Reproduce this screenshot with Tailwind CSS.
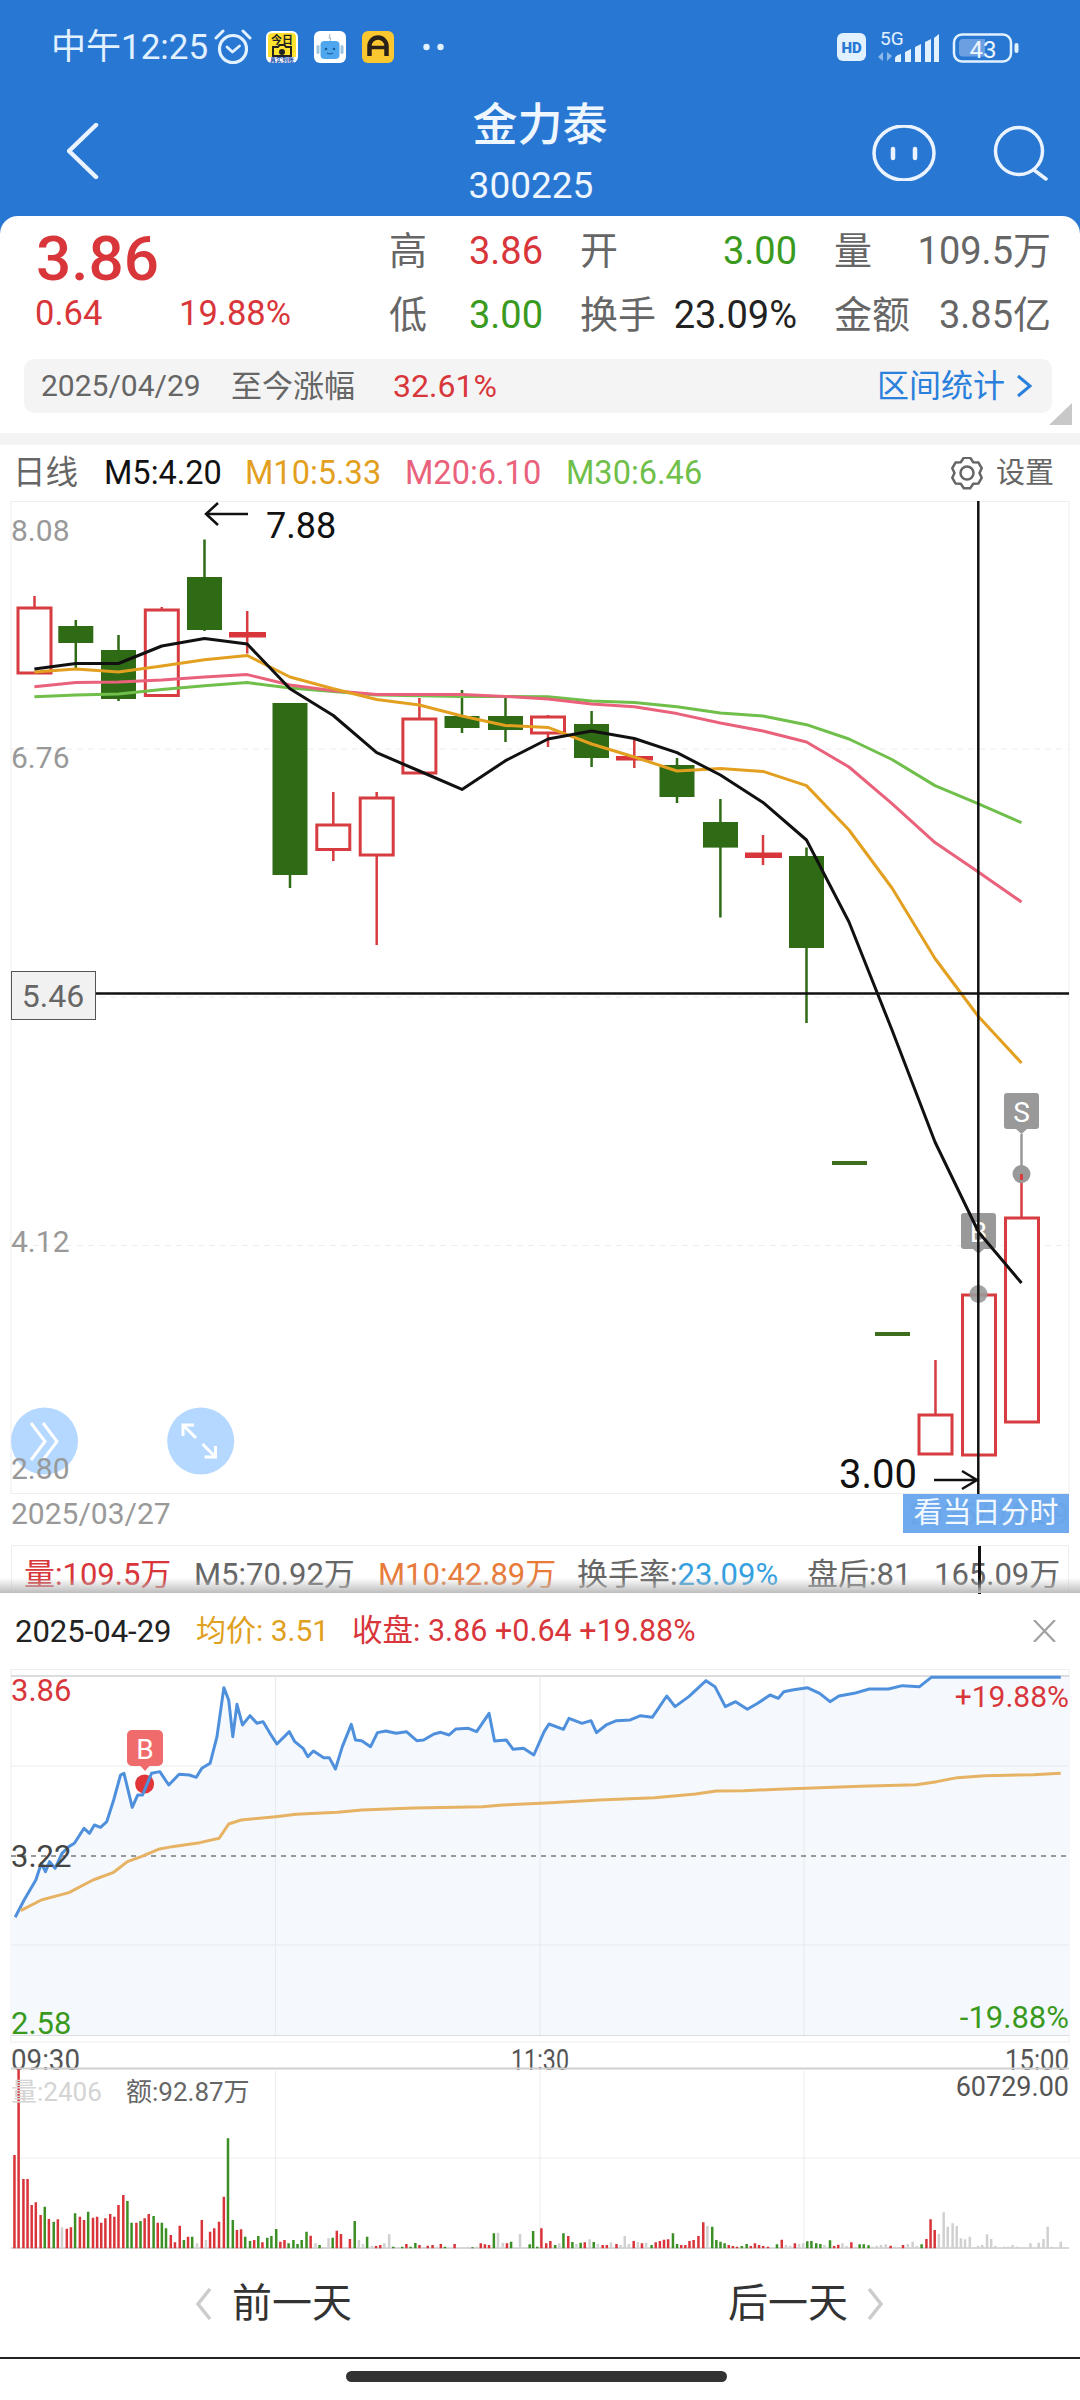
<!DOCTYPE html>
<html lang="zh">
<head>
<meta charset="utf-8">
<script src="https://cdn.jsdelivr.net/npm/@tailwindcss/browser@4"></script>
</head>
<body class="bg-white">
<div class="relative w-[1080px] h-[2400px] overflow-hidden bg-white flex flex-col [font-family:Roboto,'Noto_Sans_CJK_SC',sans-serif]">

  <!-- blue header -->
  <div class="h-[216px] shrink-0 bg-[#2878d3] flex flex-col">
    <div class="h-[94px] flex items-center pl-[51px] text-[#e2f1ff]">
      <span class="text-[35px] leading-none w-[163px] whitespace-nowrap">中午12:25</span>
      <svg class="w-[38px] h-[36px]" viewBox="214 28 38 36" fill="none" stroke="#e2f1ff" stroke-linecap="round" stroke-linejoin="round">
        <circle cx="233" cy="48" r="13.5" stroke-width="3.2"/>
        <path d="M216 37l7-7M243 30l7 7" stroke-width="3"/>
        <path d="M227 46l5.500 5 7-6" stroke-width="2.800"/>
      </svg>
      <svg class="ml-[14px] w-[32px] h-[32px]" viewBox="0 0 32 32">
        <rect width="32" height="32" rx="6" fill="#fff"/>
        <path d="M2 6a4 4 0 0 1 4-4h20a4 4 0 0 1 4 4v20H2z" fill="#fde12f"/>
        <text x="16" y="13" font-size="11" font-weight="700" text-anchor="middle" fill="#222">今日</text>
        <path d="M7 16h5l1.500-2h5l1.500 2h5v9H7z" fill="none" stroke="#222" stroke-width="2"/>
        <circle cx="16" cy="21" r="3" fill="#222"/>
        <text x="16" y="31" font-size="6" font-weight="700" text-anchor="middle" fill="#1d4fb0">真实到账</text>
      </svg>
      <svg class="ml-[16px] w-[32px] h-[32px]" viewBox="0 0 32 32">
        <rect width="32" height="32" rx="6" fill="#fff"/>
        <path d="M16 3l-1 4 2 0-1 3" stroke="#9fb4c6" stroke-width="1" fill="none"/>
        <rect x="2.500" y="14" width="3" height="9" rx="1.500" fill="#9cc4de"/>
        <rect x="26.500" y="14" width="3" height="9" rx="1.500" fill="#9cc4de"/>
        <rect x="6.500" y="10" width="19" height="18" rx="4" fill="#4ea7ee"/>
        <circle cx="12" cy="18" r="1.300" fill="#1b5c95"/>
        <circle cx="20" cy="18" r="1.300" fill="#1b5c95"/>
        <path d="M13 22q3 2 6 0" stroke="#1b5c95" stroke-width="1.100" fill="none"/>
      </svg>
      <svg class="ml-[16px] w-[32px] h-[32px]" viewBox="0 0 32 32">
        <rect width="32" height="32" rx="6" fill="#fbc731"/>
        <path d="M7.500 25V15a8.500 8.500 0 0 1 17 0v10" fill="none" stroke="#2a2218" stroke-width="4.500"/>
        <path d="M7 16.500h18" stroke="#2a2218" stroke-width="3.500"/>
      </svg>
      <svg class="ml-[29px] w-[21px] h-[8px]" viewBox="0 0 21 8"><circle cx="3.500" cy="4" r="3.200" fill="#e2f1ff"/><circle cx="17.500" cy="4" r="3.200" fill="#e2f1ff"/></svg>
      <svg class="ml-auto mr-[60px] w-[183px] h-[36px] overflow-visible" viewBox="837 28 183 36">
        <rect x="837" y="32" width="29" height="28" rx="6" fill="#e2f1ff"/>
        <text x="851.500" y="52" font-size="15" font-weight="900" text-anchor="middle" fill="#2878d3">HD</text>
        <text x="880" y="44" font-size="19" fill="#e2f1ff">5G</text>
        <path d="M883 51v9l-5-4zM887 60v-9l5 4z" fill="#8db9ea"/>
        <path d="M895 61v-3q0-3 3-4l3-1v8zM905 61v-10l6-3v13zM915 61v-15l6-3v18zM925 61v-20l6-3v23zM934 61V37l5-4v28z" fill="#e2f1ff"/>
        <rect x="954" y="33.500" width="57" height="27" rx="8" fill="none" stroke="#e2f1ff" stroke-width="2.500"/>
        <path d="M963 38h22v17.500h-22q-4 0-4-4v-9.500q0-4 4-4z" fill="#6a9fe2"/>
        <text x="983" y="57" font-size="24" text-anchor="middle" fill="#eef6ff">43</text>
        <rect x="1014.500" y="42" width="4" height="10" rx="2" fill="#e2f1ff"/>
      </svg>
    </div>
    <div class="flex items-start h-[122px]">
      <div class="w-[400px] pl-[67px] pt-[29px]">
        <svg class="w-[32px] h-[56px]" viewBox="67 123 32 56" fill="none" stroke="#eaf3ff" stroke-width="4.500" stroke-linecap="round" stroke-linejoin="round"><path d="M96 125L69 151l27 26"/></svg>
      </div>
      <div class="w-[280px] flex flex-col items-center text-[#eef6ff] pt-[10px]">
        <span class="text-[45px] leading-[44px] font-medium">金力泰</span>
        <span class="text-[37px] leading-[40px] mt-[18px] mr-[18px]">300225</span>
      </div>
      <svg class="ml-[192px] mt-[31px] w-[176px] h-[56px]" viewBox="872 125 176 56" fill="none" stroke="#eaf3ff" stroke-linecap="round">
        <ellipse cx="904" cy="153" rx="30" ry="27" stroke-width="3.500"/>
        <path d="M893 149v9M915 149v9" stroke-width="4.500"/>
        <circle cx="1019" cy="151" r="23.500" stroke-width="3.500"/>
        <path d="M1034 170l12 9" stroke-width="3.500"/>
      </svg>
    </div>
  </div>

  <!-- quote card -->
  <div class="shrink-0 bg-[#2878d3]">
  <div class="relative h-[217px] bg-white rounded-t-[18px] flex flex-col">
    <div class="flex h-[143px]">
      <div class="w-[389px] pl-[35px] pt-[13px] flex flex-col text-[#d8363a]">
        <span class="ml-[1px] text-[62px] leading-[60px] font-medium">3.86</span>
        <div class="flex text-[34.500px] leading-[48px]"><span class="w-[144px]">0.64</span><span>19.88%</span></div>
      </div>
      <div class="grid grid-cols-[154px_217px_217px] gap-x-[37px] grid-rows-[63px_65px] pt-[3px] text-[38px] text-[#666] items-center leading-none">
        <div class="flex justify-between"><span>高</span><span class="text-[#d8363a]">3.86</span></div>
        <div class="flex justify-between"><span>开</span><span class="text-[#3a9a1e]">3.00</span></div>
        <div class="flex justify-between"><span>量</span><span>109.5万</span></div>
        <div class="flex justify-between"><span>低</span><span class="text-[#3a9a1e]">3.00</span></div>
        <div class="flex justify-between"><span>换手</span><span class="text-[#222]">23.09%</span></div>
        <div class="flex justify-between"><span>金额</span><span>3.85亿</span></div>
      </div>
    </div>
    <div class="ml-[24px] w-[1028px] h-[54px] bg-[#f4f4f4] rounded-[10px] flex items-center pl-[17px] pr-[19px] text-[30px] text-[#666] leading-none">
      <span class="w-[190px]">2025/04/29</span>
      <span class="w-[162px] text-[31px]">至今涨幅</span>
      <span class="text-[#d8363a] text-[32px]">32.61%</span>
      <span class="ml-auto text-[#2b80dc] text-[32px]">区间统计</span>
      <svg class="ml-[10px] w-[18px] h-[26px]" viewBox="0 0 18 26" fill="none" stroke="#2b80dc" stroke-width="3"><path d="M3 3l12 10-12 10"/></svg>
    </div>
    <svg class="absolute left-[1049px] top-[187px] w-[23px] h-[22px]" viewBox="0 0 23 22"><path d="M23 0v22H0z" fill="#c8c8c8"/></svg>
  </div>
  </div>
  <div class="h-[12px] shrink-0 bg-[#f3f3f3]"></div>

  <!-- MA legend -->
  <div class="h-[56px] shrink-0 flex items-center pl-[13px] pr-[26px] text-[32.500px] leading-none whitespace-nowrap">
    <span class="w-[91px] text-[#666]">日线</span>
    <span class="w-[141px] text-[#111]">M5:4.20</span>
    <span class="w-[160px] text-[#e3a020]">M10:5.33</span>
    <span class="w-[161px] text-[#e9617a]">M20:6.10</span>
    <span class="text-[#6fbf4a]">M30:6.46</span>
    <svg class="ml-auto w-[32px] h-[33px]" viewBox="951 457 32 33" fill="none" stroke="#666" stroke-width="2.500" stroke-linejoin="round">
      <path d="M963.800 457.800h6.400l3.050 4.400 5.250.4 3.200 5.600-2.200 4.800 2.200 4.800-3.200 5.600-5.250.4-3.050 4.400h-6.400l-3.050-4.400-5.250-.4-3.200-5.600 2.200-4.800-2.200-4.800 3.200-5.600 5.250-.4z"/>
      <circle cx="967" cy="473" r="6.500"/>
    </svg>
    <span class="ml-[13px] text-[29px] text-[#666]">设置</span>
  </div>

  <!-- K line chart -->
  <svg class="block shrink-0 w-[1080px] h-[993px] overflow-visible" viewBox="0 501 1080 993">
    <rect x="11" y="501.500" width="1058" height="992" fill="#fff" stroke="#eeeeee" stroke-width="1"/>
    <g stroke="#eeeeee" stroke-width="1" stroke-dasharray="6 5">
      <path d="M11 749h1058M11 997h1058M11 1245.500h1058"/>
    </g>

    <!-- wicks -->
    <g stroke="#d63c40" stroke-width="2.500" fill="none">
      <path d="M34.500 596V673M161.800 607V696M247.200 611V653.500M333.300 792V861M376.700 792V945M419.400 698V773M548 715V747M634.300 740V768M763 835V865"/>
      <path d="M935.500 1360V1414M1021.500 1174V1217"/>
    </g>
    <g stroke="#2f6a14" stroke-width="2.500" fill="none">
      <path d="M75.800 620V668M118.500 635V701M204.500 539.500V631M290 703V888M462 690V733M505.500 696V742M591.600 711V767M677 758V803M720.400 799V917.600M806.500 847.600V1023"/>
    </g>
    <!-- green bodies -->
    <g fill="#2f6a14">
      <rect x="58.300" y="626" width="35" height="17"/>
      <rect x="101" y="650" width="35" height="49"/>
      <rect x="187" y="577" width="35" height="53"/>
      <rect x="272.500" y="703" width="35" height="172"/>
      <rect x="444.500" y="716" width="35" height="12"/>
      <rect x="488" y="716" width="35" height="14"/>
      <rect x="574" y="724" width="35" height="34"/>
      <rect x="659.500" y="765" width="35" height="32"/>
      <rect x="703" y="822" width="35" height="25.600"/>
      <rect x="789" y="856" width="35" height="92"/>
      <rect x="832" y="1161" width="35" height="4" fill="#3f6d1e"/>
      <rect x="875" y="1332" width="35" height="4" fill="#3f6d1e"/>
    </g>
    <!-- red crosses -->
    <g fill="#d8363a">
      <rect x="229" y="632" width="37" height="5.500"/>
      <rect x="616" y="756" width="37" height="4.500"/>
      <rect x="745" y="852.500" width="37" height="5.500"/>
    </g>
    <!-- hollow red bodies -->
    <g fill="#fff" stroke="#d63c40" stroke-width="3">
      <rect x="18" y="608" width="33" height="65"/>
      <rect x="145.300" y="610" width="33" height="85.500"/>
      <rect x="316.800" y="825" width="33" height="24.500"/>
      <rect x="360.200" y="798" width="33" height="57"/>
      <rect x="402.900" y="719" width="33" height="54"/>
      <rect x="531.500" y="717" width="33" height="16"/>
      <rect x="919" y="1415" width="33" height="39"/>
      <rect x="962.500" y="1295" width="33" height="160"/>
      <rect x="1005.500" y="1218" width="33" height="204"/>
    </g>

    <!-- trade markers -->
    <path d="M1021.500 1134V1174" stroke="#999" stroke-width="2.500"/>
    <circle cx="1021.500" cy="1174" r="9" fill="#999"/>
    <path d="M1021.500 1174v6" stroke="#d63c40" stroke-width="3"/>
    <path d="M1007 1093h29a3 3 0 0 1 3 3v30a3 3 0 0 1-3 3h-9l-5.500 5-5.500-5h-9a3 3 0 0 1-3-3v-30a3 3 0 0 1 3-3z" fill="#999"/>
    <text x="1021.500" y="1122" font-size="28" text-anchor="middle" fill="#fff">S</text>
    <circle cx="978.500" cy="1294" r="9" fill="#999" fill-opacity=".9"/>
    <path d="M964 1213h29a3 3 0 0 1 3 3v30a3 3 0 0 1-3 3h-9l-5.500 5-5.500-5h-9a3 3 0 0 1-3-3v-30a3 3 0 0 1 3-3z" fill="#999"/>
    <text x="978.500" y="1242" font-size="28" text-anchor="middle" fill="#fff">B</text>

    <!-- moving averages -->
    <g fill="none" stroke-width="3" stroke-linejoin="round">
      <polyline stroke="#6fbf4a" points="34.400,696.800 75.800,695 118.500,694 161.800,689.500 204.500,685.700 247.200,682.600 290,688 333.300,691.400 376.700,695 462,696.400 548,696.800 591.600,701 634.300,702.500 677,706.700 720.400,713 763,716 806.500,724.700 849,739 892,759.500 935,785.600 978,803.600 1021.500,822.700"/>
      <polyline stroke="#e9617a" points="34.400,686.800 75.800,682.600 118.500,682 161.800,680 204.500,677 247.200,674.600 290,685 333.300,690.700 376.700,694.500 462,694.500 505.500,696.400 548,699 591.600,704 634.300,706.700 677,713.600 720.400,723 763,731 806.500,742 849,767 892,803.600 935,842.600 978,871.700 1021.500,902"/>
      <polyline stroke="#e3a020" points="34.400,672 75.800,669 118.500,672 161.800,666 204.500,659.700 247.200,655.500 290,677 333.300,688.800 376.700,699.500 419.400,705 462,716 505.500,725.500 548,727.400 591.600,744 634.300,757 677,771 720.400,768.400 763,771.400 806.500,785.600 849,830 892,888 935,958.500 978,1016 1021.500,1063"/>
      <polyline stroke="#111" points="34.400,669 75.800,663.500 118.500,663.500 161.800,646 204.500,638.600 247.200,644 290,688.800 333.300,715.500 376.700,752.700 419.400,771 462,789.400 505.500,760.700 548,739 591.600,731 634.300,738.500 677,752.700 720.400,775 763,802.400 806.500,840 849,922 892,1030 935,1142 978.500,1232 1021.500,1283"/>
    </g>

    <!-- crosshair -->
    <path d="M978.300 501V1494" stroke="#111" stroke-width="2.500"/>
    <path d="M95 993.400H1069" stroke="#111" stroke-width="2.500"/>
    <rect x="11.500" y="971.500" width="84" height="48" fill="#f1f1f1" stroke="#555" stroke-width="1"/>
    <text x="53" y="1007" font-size="32" text-anchor="middle" fill="#666">5.46</text>

    <!-- floating buttons -->
    <circle cx="44.500" cy="1441" r="33.500" fill="#b4d8ff"/>
    <path d="M31 1423l14 18.500-14 18.500M43 1423l14 18.500-14 18.500" fill="none" stroke="#fff" stroke-width="3"/>
    <circle cx="200.700" cy="1441" r="33.500" fill="#b4d8ff"/>
    <path d="M183 1425l13 13M215.500 1457l-13-13M183 1436v-11h11M215.500 1446v11h-11" fill="none" stroke="#fff" stroke-width="3"/>

    <!-- labels -->
    <g font-size="30" fill="#999">
      <text x="11" y="541">8.08</text>
      <text x="11" y="768">6.76</text>
      <text x="11" y="1252">4.12</text>
      <text x="11" y="1479">2.80</text>
    </g>
    <path d="M248 514H206M218 503l-12 11 12 11" fill="none" stroke="#111" stroke-width="2.500"/>
    <text x="266" y="537.500" font-size="36" fill="#111">7.88</text>
    <text x="839" y="1487.500" font-size="40" fill="#111">3.00</text>
    <path d="M934 1480H977M962 1471l15 9-15 9" fill="none" stroke="#111" stroke-width="2.500"/>
  </svg>

  <!-- date row -->
  <div class="relative h-[51px] shrink-0 px-[11px] flex justify-between text-[30px] leading-[40px] text-[#999]">
    <span>2025/03/27</span>
    <span>2025/04/29</span>
    <div class="absolute right-[11px] top-0 w-[166px] h-[39px] bg-[#66a5ec]/95 text-[29px] leading-[39px] text-[#f2f8ff] text-center">看当日分时</div>
  </div>

  <!-- volume row -->
  <div class="relative h-[48px] shrink-0 ml-[11px] w-[1058px] border-t border-x border-[#eeeeee] flex items-center pl-[12px] pt-[10px] text-[31px] leading-none text-[#666] whitespace-nowrap">
    <span class="w-[170px] text-[#d8363a]">量:109.5万</span>
    <span class="w-[184px]">M5:70.92万</span>
    <span class="w-[199px] text-[#e87a3a]">M10:42.89万</span>
    <span class="w-[230px]">换手率:<span class="text-[#35a0e0]">23.09%</span></span>
    <span class="w-[127px]">盘后:81</span>
    <span>165.09万</span>
    <div class="absolute left-[966px] top-0 w-[2.5px] h-[48px] bg-[#111]"></div>
    <div class="absolute -left-[12px] bottom-0 w-[1080px] h-[15px] bg-gradient-to-b from-[#ffffff00] to-[#bdbdbd]"></div>
  </div>

  <!-- day sheet header -->
  <div class="h-[76px] shrink-0 bg-white flex items-center pl-[15px] pr-[24px] text-[30px] leading-none whitespace-nowrap">
    <span class="w-[181px] text-[#222] text-[31px]">2025-04-29</span>
    <span class="w-[156px] text-[#e0a020]">均价: 3.51</span>
    <span class="text-[#d8363a] text-[30.500px]">收盘: 3.86 +0.64 +19.88%</span>
    <svg class="ml-auto w-[23px] h-[22px]" viewBox="0 0 23 22" fill="none" stroke="#a0a0a0" stroke-width="2.200"><path d="M1 0l21 22M22 0L1 22"/></svg>
  </div>

  <!-- intraday + volume chart -->
  <svg class="block shrink-0 w-[1080px] h-[581px] overflow-visible" viewBox="0 1669 1080 581">
    <rect x="11" y="1669.500" width="1058" height="372.500" fill="none" stroke="#eeeeee"/>
    <path d="M11 1676H1069M11 2035H1069" stroke="#cfd1d4" stroke-width="1.500"/>

    <g transform="translate(0,1590) scale(0.6888,0.3333)">
      <path fill="#f5f9fe" d="M15 1335V982L22 982 35 930 52 870 60 820 66 845 72 815 80 835 90 790 100 770 108 760 122 715 130 730 137 705 146 712 155 695 165 630 175 555 180 550 192 652 200 615 207 615 220 550 232 545 245 585 260 553 275 555 285 562 293 535 305 520 315 440 325 293 332 330 338 440 344 343 352 405 363 377 373 400 382 395 392 430 402 462 420 425 428 455 440 475 447 500 455 483 470 503 478 503 487 537 497 470 510 403 516 450 525 452 538 470 548 428 560 423 575 430 590 425 605 452 615 450 630 432 640 427 652 435 662 417 680 415 692 425 710 370 718 453 735 450 745 478 760 475 775 495 790 425 797 402 818 418 826 385 845 400 858 392 866 428 880 405 895 392 915 390 930 377 947 382 968 318 980 350 1000 320 1025 272 1038 290 1053 350 1068 335 1085 358 1100 340 1118 315 1130 325 1138 305 1150 300 1172 293 1190 310 1205 335 1218 318 1240 310 1262 297 1290 297 1310 287 1335 290 1352 262 1552 262V1335Z"/>
    </g>
    <g stroke="#e8ecf0" stroke-width="1.200">
      <path d="M11 1766H1069M11 1945H1069M275.500 1676V2035M540 1676V2035M804 1676V2035"/>
    </g>
    <path d="M11 1856H1069" stroke="#9a9a9a" stroke-width="1.800" stroke-dasharray="5 5"/>
    <circle cx="144.600" cy="1784" r="9.500" fill="#e0363a"/>
    <g transform="translate(0,1590) scale(0.6888,0.3333)" fill="none">
      <path vector-effect="non-scaling-stroke" stroke="#4f90dd" stroke-width="3" stroke-linejoin="round" d="M22 982L35 930 52 870 60 820 66 845 72 815 80 835 90 790 100 770 108 760 122 715 130 730 137 705 146 712 155 695 165 630 175 555 180 550 192 652 200 615 207 615 220 550 232 545 245 585 260 553 275 555 285 562 293 535 305 520 315 440 325 293 332 330 338 440 344 343 352 405 363 377 373 400 382 395 392 430 402 462 420 425 428 455 440 475 447 500 455 483 470 503 478 503 487 537 497 470 510 403 516 450 525 452 538 470 548 428 560 423 575 430 590 425 605 452 615 450 630 432 640 427 652 435 662 417 680 415 692 425 710 370 718 453 735 450 745 478 760 475 775 495 790 425 797 402 818 418 826 385 845 400 858 392 866 428 880 405 895 392 915 390 930 377 947 382 968 318 980 350 1000 320 1025 272 1038 290 1053 350 1068 335 1085 358 1100 340 1118 315 1130 325 1138 305 1150 300 1172 293 1190 310 1205 335 1218 318 1240 310 1262 297 1290 297 1310 287 1335 290 1352 262 1540 262"/>
      <path vector-effect="non-scaling-stroke" stroke="#e6b263" stroke-width="3" stroke-linejoin="round" d="M30 962L60 930 100 908 135 870 165 847 185 815 205 800 230 778 250 770 290 758 318 745 332 702 350 690 400 680 430 673 490 667 525 660 600 654 700 650 730 645 800 638 870 630 950 623 1010 612 1040 603 1080 602 1130 598 1180 594 1250 589 1330 584 1360 575 1390 563 1430 557 1500 554 1540 550"/>
    </g>

    <path d="M132 1730h26a5 5 0 0 1 5 5v26a5 5 0 0 1-5 5h-8.500l-4.500 5-4.500-5H132a5 5 0 0 1-5-5v-26a5 5 0 0 1 5-5z" fill="#f06c6c"/>
    <text x="145" y="1759" font-size="28" text-anchor="middle" fill="#fff">B</text>

    <g font-size="31">
      <text x="11" y="1701" fill="#d8363a">3.86</text>
      <text x="11" y="1867" fill="#444">3.22</text>
      <text x="11" y="2034" fill="#3a9a1e">2.58</text>
      <text x="1069" y="1707" font-size="30" text-anchor="end" fill="#d8363a">+19.88%</text>
      <text x="1069" y="2028" text-anchor="end" fill="#3a9a1e">-19.88%</text>
    </g>

    <!-- time axis -->
    <g font-size="30" fill="#555">
      <text x="11" y="2070" textLength="69" lengthAdjust="spacingAndGlyphs">09:30</text>
      <text x="511" y="2070" textLength="58" lengthAdjust="spacingAndGlyphs">11:30</text>
      <text x="1005" y="2070" textLength="64" lengthAdjust="spacingAndGlyphs">15:00</text>
    </g>
    <path d="M11 2068.500H1069" stroke="#cfcfcf" stroke-width="1.800"/>
    <g stroke="#eeeeee" stroke-width="1.200">
      <path d="M11 2158H1080M275.500 2069V2248M540 2069V2248M804 2069V2248"/>
    </g>
    <path d="M11 2248H1069" stroke="#cccccc" stroke-width="1.500"/>

    <!-- volume bars -->
    <g transform="translate(0,2040) scale(0.6888,0.3333)" fill="none" stroke-width="2.500">
      <path vector-effect="non-scaling-stroke" stroke="#d0d0d0" d="M90 562V625M286 610V625M299 600V625M458 610V625M470 622V625M477 595V625M502 622V625M521 600V625M527 612V625M540 617V625M558 610V625M565 583V625M578 622V625M615 620V625M634 620V625M672 622V625M680 620V625M692 620V625M723 578V625M730 608V625M755 582V625M812 610V625M837 612V625M856 598V625M868 612V625M887 607V625M901 615V625M907 588V625M913 612V625M926 606V625M938 608V625M1027 558V625M1141 615V625M1147 618V625M1160 612V625M1166 610V625M1197 615V625M1223 610V625M1229 618V625M1242 620V625M1267 620V625M1273 617V625M1279 615V625M1286 613V625M1299 620V625M1305 622V625M1318 612V625M1325 605V625M1331 618V625M1363 582V625M1370 517V625M1376 560V625M1383 550V625M1389 558V625M1395 595V625M1401 598V625M1408 590V625M1420 618V625M1426 615V625M1433 583V625M1439 597V625M1445 618V625M1458 620V625M1464 620V625M1470 615V625M1477 620V625M1496 610V625M1508 608V625M1515 597V625M1521 560V625M1527 620V625M1540 605V625"/>
      <path vector-effect="non-scaling-stroke" stroke="#3b8f24" d="M65 500V625M78 545V625M109 520V625M128 515V625M185 483V625M191 548V625M204 543V625M223 528V625M235 548V625M241 565V625M267 600V625M279 590V625M331 295V625M338 540V625M356 590V625M363 603V625M375 588V625M388 593V625M394 588V625M401 567V625M419 610V625M426 600V625M432 612V625M438 600V625M445 575V625M464 615V625M483 593V625M515 543V625M533 590V625M571 620V625M584 620V625M596 620V625M603 609V625M646 620V625M686 622V625M717 580V625M742 605V625M769 613V625M774 573V625M780 620V625M806 615V625M818 580V625M831 606V625M843 608V625M862 606V625M946 615V625M977 580V625M983 612V625M1034 560V625M1040 600V625M1046 605V625M1052 610V625M1077 618V625M1084 612V625M1128 613V625M1172 604V625M1178 603V625M1185 610V625M1191 612V625M1205 601V625M1248 613V625M1254 613V625M1261 616V625M1338 613V625"/>
      <path vector-effect="non-scaling-stroke" stroke="#d8343a" d="M21 345V625M27 88V625M34 417V625M40 417V625M46 495V625M52 487V625M59 525V625M71 537V625M84 538V625M97 566V625M103 562V625M116 530V625M122 540V625M135 533V625M141 530V625M147 548V625M153 535V625M160 522V625M166 530V625M172 495V625M179 465V625M198 548V625M210 535V625M216 522V625M229 548V625M248 585V625M254 607V625M261 557V625M273 590V625M293 540V625M305 575V625M311 565V625M318 545V625M325 470V625M344 570V625M350 568V625M369 600V625M381 607V625M407 605V625M413 600V625M451 587V625M489 572V625M495 582V625M508 597V625M546 618V625M552 615V625M590 612V625M609 615V625M621 617V625M628 615V625M640 612V625M660 612V625M698 610V625M704 613V625M710 615V625M736 610V625M786 565V625M793 610V625M799 603V625M825 588V625M849 607V625M875 615V625M881 615V625M895 612V625M920 603V625M932 610V625M952 607V625M958 603V625M964 599V625M970 598V625M989 615V625M995 615V625M1001 603V625M1007 600V625M1014 588V625M1021 547V625M1058 615V625M1064 618V625M1070 620V625M1090 618V625M1096 610V625M1102 615V625M1108 618V625M1115 620V625M1135 599V625M1154 610V625M1211 618V625M1217 614V625M1236 607V625M1293 617V625M1311 615V625M1345 597V625M1351 538V625M1357 570V625"/>
    </g>
    <text x="11" y="2101" font-size="26" fill="#d4d4d4">量:2406</text>
    <text x="126" y="2101" font-size="26" fill="#666">额:92.87万</text>
    <text x="1069" y="2095.500" font-size="27" text-anchor="end" fill="#555">60729.00</text>
  </svg>

  <!-- prev / next -->
  <div class="h-[107px] shrink-0 flex items-center text-[40px] leading-none text-[#333]">
    <div class="w-[728px] pl-[195px] flex items-center">
      <svg class="w-[17px] h-[32px]" viewBox="0 0 17 32" fill="none" stroke="#cccccc" stroke-width="3.500"><path d="M15 1L3 16l12 15"/></svg>
      <span class="ml-[20px]">前一天</span>
    </div>
    <span>后一天</span>
    <svg class="ml-[19px] w-[17px] h-[32px]" viewBox="0 0 17 32" fill="none" stroke="#cccccc" stroke-width="3.500"><path d="M2 1l12 15L2 31"/></svg>
  </div>
  <div class="h-[2px] shrink-0 bg-[#222]"></div>
  <div class="ml-[346px] mt-[12px] w-[381px] h-[11px] rounded-full bg-[#333]"></div>
</div>
</body>
</html>
